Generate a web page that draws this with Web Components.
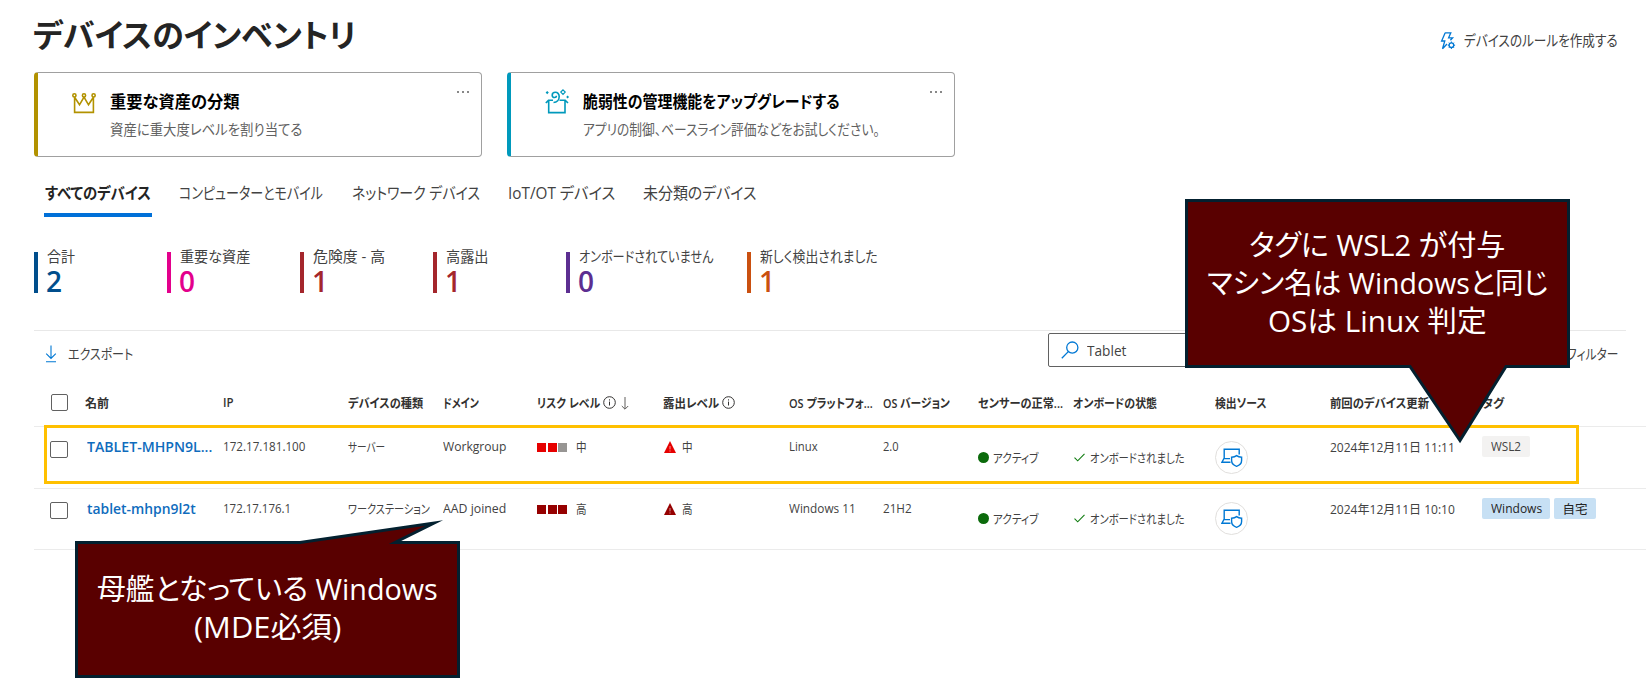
<!DOCTYPE html>
<html lang="ja">
<head>
<meta charset="utf-8">
<title>デバイスのインベントリ</title>
<style>
  body {
    margin: 0;
    width: 1646px;
    height: 686px;
    overflow: hidden;
    background: #fff;
    color: #424242;
    font-family: "Open Sans", "Noto Sans CJK JP", sans-serif;
  }
</style>
</head>
<body>
<inventory-page></inventory-page>

<script>
const ICONS = {
  crown: `<svg width="24" height="21" viewBox="0 0 24 21" fill="none" stroke="#b29200" stroke-width="1.6">
    <path d="M2.6 4.2V19.4H21.4V4.2L16.5 11.8L12 4L7.5 11.8Z"/>
    <circle cx="2.4" cy="2.4" r="1.6" fill="#fff"/><circle cx="12" cy="2.4" r="1.6" fill="#fff"/><circle cx="21.6" cy="2.4" r="1.6" fill="#fff"/></svg>`,
  box: `<svg width="24" height="25" viewBox="0 0 24 25" fill="none" stroke="#0099bc" stroke-width="1.6">
    <path d="M8 11.2H3.7V23.6H20V11.2H14.5M3.7 11.2L.8 14M20 11.2L23 14"/>
    <path d="M8.5 13.5C12 13.5 14.2 10.8 14.2 7.6C14.2 4.8 12.4 3.3 10.4 3.3C8.4 3.3 7.2 4.8 7.2 6.2C7.2 7.6 8.4 8.5 9.6 8.5C10.7 8.5 11.4 7.8 11.4 6.8"/>
    <path d="M18 .9L20.2 3.1L18 5.3L15.8 3.1Z" stroke-width="1.2"/>
    <path d="M2.2 2L3.8 3.6L2.2 5.2L.6 3.6ZM22.6 6.6L24 8L22.6 9.4L21.2 8Z" fill="#0099bc" stroke="none"/></svg>`,
  rule: `<svg width="16" height="18" viewBox="0 0 16 18" fill="none" stroke="#0078d4" stroke-width="1.3">
    <path d="M5.2.8H10.8L8.6 5.8H12.6L10.4 8.2M5.2.8L1.6 9H4.8L2.5 16.8L7 12"/>
    <circle cx="11.4" cy="13.2" r="2.3"/><path d="M11.4 9.5v1.4M11.4 15.5v1.5M7.8 13.2h1.4M13.6 13.2h1.5M8.9 10.7l1 1M12.9 14.7l1 1M13.9 10.7l-1 1M9.9 14.7l-1 1" stroke-width="1"/></svg>`,
  download: `<svg width="12" height="18" viewBox="0 0 12 18" fill="none" stroke="#0078d4" stroke-width="1.1">
    <path d="M6 .5V13M1.2 8.6L6 13.4L10.8 8.6M1 16.7H11"/></svg>`,
  search: `<svg width="18" height="18" viewBox="0 0 18 18" fill="none" stroke="#0078d4" stroke-width="1.3">
    <circle cx="11.3" cy="6.6" r="5.6"/><path d="M7.3 10.6L.8 17.2"/></svg>`,
  info: `<svg width="13" height="13" viewBox="0 0 13 13" fill="none" stroke="#323130" stroke-width="1">
    <circle cx="6.5" cy="6.5" r="5.8"/><path d="M6.5 5.6V9.5M6.5 3.3V4.5"/></svg>`,
  down: `<svg width="8" height="13" viewBox="0 0 8 13" fill="none" stroke="#605e5c" stroke-width="1">
    <path d="M4 0V12M.8 9L4 12.2L7.2 9"/></svg>`,
  alert: `<svg width="12" height="12" viewBox="0 0 12 12"><path d="M6 0L12 12H0Z" fill="currentColor"/>
    <path d="M6 5V8.4M6 9.4V10.6" stroke="#fff" stroke-opacity=".6"/></svg>`,
  check: `<svg width="11" height="9" viewBox="0 0 11 9" fill="none" stroke="#107c10" stroke-width="1.1">
    <path d="M.5 4.6L3.7 7.8L10.5 .8"/></svg>`,
  laptop: `<svg width="22" height="19" viewBox="0 0 22 19" fill="none" stroke="#0078d4" stroke-width="1.4">
    <path d="M3.2 10V1.2H18.2V6.5M3.2 10L1 14.2H9.5M3 10.6H9"/>
    <path d="M15.6 7.6C17 8.8 18.6 9.2 20.6 9.2V12.6C20.6 15.6 18.4 17.4 15.6 18.3C12.8 17.4 10.6 15.6 10.6 12.6V9.2C12.6 9.2 14.2 8.8 15.6 7.6Z" fill="#fff"/></svg>`
};

class InventoryPage extends HTMLElement {
  constructor() {
    super();
    this.attachShadow({ mode: 'open' });
  }

  connectedCallback() {
    this.shadowRoot.innerHTML = `
      <style>
        :host { display: block; position: relative; height: 686px; }
        header {
          display: flex;
          justify-content: space-between;
          align-items: center;
          height: 72px;
          padding: 0 28px 2px 33px;
          box-sizing: border-box;
        }
        h1 { margin: 0; font-size: 32px; line-height: 40px; color: #242424; display: flex; }
        .rule { display: flex; align-items: center; gap: 8px; font-size: 15px; margin-top: 8px; }
        .rule svg { margin-top: 3px; }
        .cards { display: flex; gap: 25px; padding-left: 34px; }
        .tabs { display: flex; gap: 27.3px; padding-left: 44px; height: 60px; box-sizing: border-box; padding-top: 23px; }
        .metrics { display: flex; padding: 35px 0 0 34px; height: 113px; box-sizing: border-box; }
        .toolbar {
          display: flex;
          align-items: flex-start;
          margin-left: 34px;
          width: 1592px;
          height: 49px;
          border-top: 1px solid #e8e8e8;
          box-sizing: border-box;
          font-size: 14px;
        }
        .export { display: flex; align-items: center; gap: 11px; padding: 12px 0 0 11px; width: 1003px; }
        .export svg { margin-top: 1px; }
        .search {
          display: flex;
          align-items: center;
          gap: 8px;
          width: 400px;
          height: 34px;
          box-sizing: border-box;
          padding-left: 12px;
          border: 1px solid #616161;
          border-radius: 2px;
          margin-top: 2px;
        }
        .filter { padding: 12px 0 0 119px; }
        .highlight {
          position: absolute;
          left: 44px; top: 425px;
          width: 1535px; height: 59px;
          box-sizing: border-box;
          border: 3px solid #ffc000;
        }
        call-out { position: absolute; }
        .tag { left: 1185px; top: 199px; }
        .host { left: 75px; top: 519px; }
      </style>
      <header>
        <h1><fit-text w="323">デバイスのインベントリ</fit-text></h1>
        <div class="rule">${ICONS.rule}<fit-text w="154">デバイスのルールを作成する</fit-text></div>
      </header>
      <div class="cards">
        <notice-card icon="crown" color="#b29200">
          <fit-text w="129" slot="title">重要な資産の分類</fit-text>
          <fit-text w="192">資産に重大度レベルを割り当てる</fit-text>
        </notice-card>
        <notice-card icon="box" color="#0099bc">
          <fit-text w="257" slot="title">脆弱性の管理機能をアップグレードする</fit-text>
          <fit-text w="297">アプリの制御、ベースライン評価などをお試しください。</fit-text>
        </notice-card>
      </div>
      <div class="tabs">
        <tab-item active><fit-text w="106">すべてのデバイス</fit-text></tab-item>
        <tab-item><fit-text w="144">コンピューターとモバイル</fit-text></tab-item>
        <tab-item><fit-text w="128">ネットワーク デバイス</fit-text></tab-item>
        <tab-item><fit-text w="107">IoT/OT デバイス</fit-text></tab-item>
        <tab-item><fit-text w="114">未分類のデバイス</fit-text></tab-item>
      </div>
      <div class="metrics">
        <metric-tile value="2" color="#004e8c" w="133"><fit-text w="28">合計</fit-text></metric-tile>
        <metric-tile value="0" color="#e3008c" w="133"><fit-text w="70">重要な資産</fit-text></metric-tile>
        <metric-tile value="1" color="#a4262c" w="133"><fit-text w="72">危険度 - 高</fit-text></metric-tile>
        <metric-tile value="1" color="#a4262c" w="133"><fit-text w="43">高露出</fit-text></metric-tile>
        <metric-tile value="0" color="#5c2e91" w="181"><fit-text w="134">オンボードされていません</fit-text></metric-tile>
        <metric-tile value="1" color="#ca5010" w="160"><fit-text w="118">新しく検出されました</fit-text></metric-tile>
      </div>
      <div class="toolbar">
        <div class="export">${ICONS.download}<fit-text w="65">エクスポート</fit-text></div>
        <div class="search">${ICONS.search}<fit-text w="39">Tablet</fit-text></div>
        <div class="filter"><fit-text w="51">フィルター</fit-text></div>
      </div>
      <device-table></device-table>
      <div class="highlight"></div>
      <call-out class="tag" width="385" height="246" shape="M1.5 1.5H383.5V167.5H321L275 241.5L225 167.5H1.5Z" pad="26.5">
        <fit-text w="256">タグに WSL2 が付与</fit-text>
        <fit-text w="341">マシン名は Windowsと同じ</fit-text>
        <fit-text w="219">OSは Linux 判定</fit-text>
      </call-out>
      <call-out class="host" width="385" height="160" shape="M1.5 23.5H225L359 4L320 23.5H383.5V157.5H1.5Z" pad="50.5">
        <fit-text w="341">母艦となっている Windows</fit-text>
        <fit-text w="147">(MDE必須)</fit-text>
      </call-out>
    `;
  }
}

class NoticeCard extends HTMLElement {
  constructor() {
    super();
    this.attachShadow({ mode: 'open' });
  }

  connectedCallback() {
    this.shadowRoot.innerHTML = `
      <style>
        :host {
          display: flex;
          width: 448px;
          height: 85px;
          box-sizing: border-box;
          border: 1px solid #a0a0a0;
          border-left: 4px solid ${this.getAttribute('color')};
          border-radius: 4px;
          padding: 18px 12px 0 34px;
        }
        .icon { width: 38px; }
        .icon svg { display: block; margin-top: ${this.getAttribute('icon') === 'box' ? -2 : 2}px; }
        .text { flex: 1; font-size: 14.5px; color: #616161; margin-top: -1px; }
        .title { font-size: 16.5px; font-weight: 600; color: #000; height: 26px; line-height: 24px; }
        .body { line-height: 27px; }
        .more { display: flex; gap: 3px; }
        .more i { width: 2px; height: 2px; background: #616161; border-radius: 1px; }
      </style>
      <div class="icon">${ICONS[this.getAttribute('icon')]}</div>
      <div class="text">
        <div class="title"><slot name="title"></slot></div>
        <div class="body"><slot></slot></div>
      </div>
      <div class="more"><i></i><i></i><i></i></div>
    `;
  }
}

class TabItem extends HTMLElement {
  constructor() {
    super();
    this.attachShadow({ mode: 'open' });
  }

  connectedCallback() {
    this.shadowRoot.innerHTML = `
      <style>
        :host { display: block; height: 37px; box-sizing: border-box; font-size: 16px; line-height: 26px; padding: 0 1px; margin-right: -1px; }
        :host([active]) { font-weight: 600; border-bottom: 4px solid #0070d8; color: #242424; }
      </style>
      <slot></slot>
    `;
  }
}

class MetricTile extends HTMLElement {
  constructor() {
    super();
    this.attachShadow({ mode: 'open' });
  }

  connectedCallback() {
    this.shadowRoot.innerHTML = `
      <style>
        :host { display: flex; gap: 9px; width: ${this.getAttribute('w')}px; height: 41px; }
        .bar { width: 4px; height: 41px; background: ${this.getAttribute('color')}; }
        .label { font-size: 14.5px; height: 14px; line-height: 20px; margin-top: -5px; margin-bottom: 5px; }
        .value { font-size: 28px; font-weight: 600; line-height: 30px; margin-left: -1px; color: ${this.getAttribute('color')}; }
      </style>
      <div class="bar"></div>
      <div>
        <div class="label"><slot></slot></div>
        <div class="value">${this.getAttribute('value')}</div>
      </div>
    `;
  }
}

const HEADERS = [
  ['名前', 24], ['IP', 11], ['デバイスの種類', 75], ['ドメイン', 36],
  ['リスク レベル', 63, ICONS.info + '<span class="sort">' + ICONS.down + '</span>'],
  ['露出レベル', 56, ICONS.info], ['OS プラットフォ...', 84], ['OS バージョン', 67],
  ['センサーの正常...', 85], ['オンボードの状態', 84], ['検出ソース', 52],
  ['前回のデバイス更新', 99], ['タグ', 22]
];

const DEVICES = [
  {
    name: ['TABLET-MHPN9L...', 125], ip: ['172.17.181.100', 82], type: ['サーバー', 37],
    domain: ['Workgroup', 63], level: '中', color: '#e60000', risk: 2,
    os: ['Linux', 29], version: ['2.0', 16], seen: ['2024年12月11日 11:11', 125],
    tags: [['WSL2', 30, 'plain']]
  },
  {
    name: ['tablet-mhpn9l2t', 109], ip: ['172.17.176.1', 68], type: ['ワークステーション', 82],
    domain: ['AAD joined', 63], level: '高', color: '#960000', risk: 3,
    os: ['Windows 11', 67], version: ['21H2', 29], seen: ['2024年12月11日 10:10', 125],
    tags: [['Windows', 51, 'blue'], ['自宅', 25, 'blue']]
  }
];

const fit = ([text, w]) => `<fit-text w="${w}">${text}</fit-text>`;

class DeviceTable extends HTMLElement {
  constructor() {
    super();
    this.attachShadow({ mode: 'open' });
  }

  renderRow(d) {
    const squares = [0, 1, 2].map(i =>
      `<i style="background:${i < d.risk ? d.color : '#979593'}"></i>`).join('');
    const tags = d.tags.map(t => `<span class="tag ${t[2]}">${fit(t)}</span>`).join('');
    return `
      <div class="row">
        <div><span class="box"></span></div>
        <div class="name">${fit(d.name)}</div>
        <div>${fit(d.ip)}</div>
        <div>${fit(d.type)}</div>
        <div>${fit(d.domain)}</div>
        <div><span class="squares">${squares}</span>${fit([d.level, 11])}</div>
        <div><span class="alert" style="color:${d.color}">${ICONS.alert}</span>${fit([d.level, 11])}</div>
        <div>${fit(d.os)}</div>
        <div>${fit(d.version)}</div>
        <div class="low"><span class="dot"></span>${fit(['アクティブ', 45])}</div>
        <div class="low"><span class="check">${ICONS.check}</span>${fit(['オンボードされました', 95])}</div>
        <div class="low"><span class="source">${ICONS.laptop}</span></div>
        <div>${fit(d.seen)}</div>
        <div class="tags">${tags}</div>
      </div>`;
  }

  connectedCallback() {
    this.shadowRoot.innerHTML = `
      <style>
        :host { display: block; margin-left: 34px; margin-top: 1px; font-size: 12.5px; }
        .head, .row {
          display: grid;
          grid-template-columns: 35px 138px 125px 95px 94px 126px 126px 94px 95px 95px 142px 115px 152px 1fr;
          padding-left: 16px;
          border-bottom: 1px solid #ebebeb;
        }
        .head { height: 46px; font-weight: 600; color: #323130; }
        .row { height: 61.5px; box-sizing: border-box; }
        .head > div, .row > div { display: flex; align-items: center; height: 45px; }
        .row > div { height: 39px; }
        .row > .low { height: 60px; }
        .box { width: 17px; height: 17px; box-sizing: border-box; border: 1px solid #616161; border-radius: 2px; }
        .head .box { margin-left: 1px; }
        .row .box { margin-top: 5px; width: 18px; }
        .name { padding-left: 2px; font-size: 14px; font-weight: 600; color: #0f6cbd; }
        .head svg { margin-left: 3px; }
        .sort { display: flex; margin: 2px 0 0 2px; }
        .squares { display: flex; gap: 1.5px; margin: 2px 9px 0 0; }
        .squares i { width: 9px; height: 9px; }
        .alert { display: flex; margin: 1px 6px 0 1px; }
        .dot { width: 11px; height: 11px; border-radius: 50%; background: #0b6a0b; margin-right: 4px; }
        .check { display: flex; margin: 0 5px 0 1px; }
        .source {
          width: 33px; height: 33px;
          box-sizing: border-box;
          border: 1px solid #e1dfdd;
          border-radius: 50%;
          display: flex;
          align-items: center;
          justify-content: center;
        }
        .tags { gap: 4px; }
        .tag { height: 21px; display: flex; align-items: center; padding: 0 9px; border-radius: 2px; }
        .plain { background: #f3f2f1; }
        .blue { background: #c7e0f4; color: #242424; padding: 0 8.5px; }
      </style>
      <div class="head">
        <div><span class="box"></span></div>
        ${HEADERS.map(h => `<div>${fit(h)}${h[2] || ''}</div>`).join('')}
      </div>
      ${DEVICES.map(d => this.renderRow(d)).join('')}
    `;
  }
}

class CallOut extends HTMLElement {
  constructor() {
    super();
    this.attachShadow({ mode: 'open' });
  }

  connectedCallback() {
    const w = this.getAttribute('width');
    const h = this.getAttribute('height');
    this.shadowRoot.innerHTML = `
      <style>
        :host { display: grid; width: ${w}px; height: ${h}px; color: #fff; font-size: 29px; line-height: 38px; }
        svg, .text { grid-area: 1 / 1; }
        .text { display: flex; flex-direction: column; align-items: center; padding: ${this.getAttribute('pad')}px 1px 0 0; }
      </style>
      <svg width="${w}" height="${h}"><path d="${this.getAttribute('shape')}" fill="#590000" stroke="#03202f" stroke-width="3" stroke-miterlimit="10"/></svg>
      <div class="text"><slot></slot></div>
    `;
  }
}

// A single line of text set to an exact advance width
class FitText extends HTMLElement {
  constructor() {
    super();
    this.attachShadow({ mode: 'open' });
  }

  connectedCallback() {
    const w = Number(this.getAttribute('w'));
    this.shadowRoot.innerHTML = `
      <style>
        :host { display: block; width: ${w}px; flex: none; }
        span { display: inline-block; white-space: nowrap; transform-origin: 0 0; font-feature-settings: "palt"; }
      </style>
      <span><slot></slot></span>
    `;
    const span = this.shadowRoot.querySelector('span');
    span.style.transform = `scaleX(${w / span.offsetWidth})`;
  }
}

customElements.define('inventory-page', InventoryPage);
customElements.define('notice-card', NoticeCard);
customElements.define('tab-item', TabItem);
customElements.define('metric-tile', MetricTile);
customElements.define('device-table', DeviceTable);
customElements.define('call-out', CallOut);
customElements.define('fit-text', FitText);
</script>
</body>
</html>
